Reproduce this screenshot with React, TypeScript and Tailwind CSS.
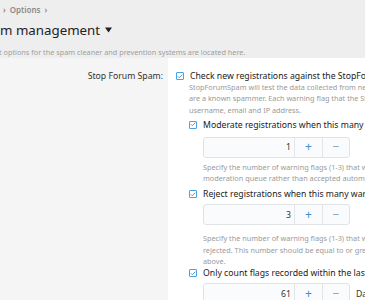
import { Check } from 'lucide-react';

function Box() {
  return (
    <span className="flex h-[8px] w-[8px] shrink-0 items-center justify-center rounded-[1px] border border-[#4aa3df] bg-white">
      <Check className="h-[7px] w-[7px] text-[#3a8fd0]" strokeWidth={3.5} />
    </span>
  );
}

function Spinner({ value, unit }: { value: string; unit?: string }) {
  return (
    <div className="flex items-center">
      <div className="flex h-[21px] w-[147px] shrink-0 rounded-[3px] border border-[#e0e3e6] bg-[#fafbfc] text-[8.7px] text-[#333]">
        <span className="flex flex-1 items-center justify-end pr-[3px]">{value}</span>
        <span className="flex w-[28px] items-center justify-center border-l border-[#e3e6e9] text-[12px] text-[#3d8fd6]">+</span>
        <span className="flex w-[27px] items-center justify-center border-l border-[#e3e6e9] text-[12px] text-[#8aa6c0]">−</span>
      </div>
      {unit && <span className="ml-[6px] shrink-0 text-[8.7px] text-[#333]">{unit}</span>}
    </div>
  );
}

function Hint({ children }: { children: React.ReactNode }) {
  return <p className="whitespace-nowrap text-[7.3px] leading-[11.3px] text-[#9a9a9a]">{children}</p>;
}

export default function App() {
  return (
    <div className="h-[300px] w-[365px] overflow-hidden bg-white font-['Noto_Sans',sans-serif]">
      {/* Header */}
      <div className="h-[58px] whitespace-nowrap bg-[#eeeeee] pl-[3px] pt-[4px]">
        <div className="flex items-center gap-[4px] text-[8px] font-semibold leading-[12px] text-[#8a8a8a]">
          <span>›</span>
          <span>Options</span>
          <span>›</span>
        </div>
        <h1 className="-ml-[3px] mt-[4px] flex items-center text-[13.3px] leading-[20px] text-[#222]">
          m management
          <svg className="ml-[5px] h-[6px] w-[7px]" viewBox="0 0 7 6">
            <path d="M0 0.5h7L3.5 5.5z" fill="#222" />
          </svg>
        </h1>
        <p className="-ml-[4px] mt-[7px] text-[7.3px] leading-[11px] text-[#a0a0a0]">
          t options for the spam cleaner and prevention systems are located here.
        </p>
      </div>

      {/* Form row */}
      <div className="flex h-[242px]">
        <div className="w-[168px] shrink-0 bg-[#f5f5f5] pr-[5px] pt-[11px] text-right text-[8.7px] leading-[14px] text-[#333]">
          Stop Forum Spam:
        </div>
        <div className="flex-1 overflow-hidden whitespace-nowrap pl-[8px] pt-[11px] text-[8.7px] leading-[14px] text-[#222]">
          <label className="flex items-center gap-[6px]">
            <Box />
            <span>Check new registrations against the StopForumSpam database</span>
          </label>
          <div className="-mt-[1px] pl-[13px]">
            <Hint>StopForumSpam will test the data collected from new registrations</Hint>
            <Hint>are a known spammer. Each warning flag that the StopForumSpam</Hint>
            <Hint>username, email and IP address.</Hint>

            <label className="mt-[2px] flex items-center gap-[6px]">
              <Box />
              <span>Moderate registrations when this many warning flags</span>
            </label>
            <div className="mt-[5px] pl-[14px]">
              <Spinner value="1" />
              <div className="mt-[4px]">
                <Hint>Specify the number of warning flags (1-3) that will cause the</Hint>
                <Hint>moderation queue rather than accepted automatically.</Hint>
              </div>
            </div>

            <label className="mt-[3px] flex items-center gap-[6px]">
              <Box />
              <span>Reject registrations when this many warning flags</span>
            </label>
            <div className="mt-[3px] pl-[14px]">
              <Spinner value="3" />
              <div className="mt-[8px]">
                <Hint>Specify the number of warning flags (1-3) that will cause the</Hint>
                <Hint>rejected. This number should be equal to or greater than the</Hint>
                <Hint>above.</Hint>
              </div>
            </div>

            <label className="-mt-[1px] flex items-center gap-[6px]">
              <Box />
              <span>Only count flags recorded within the last</span>
            </label>
            <div className="mt-[3px] pl-[14px]">
              <Spinner value="61" unit="Days" />
            </div>
          </div>
        </div>
      </div>
    </div>
  );
}
